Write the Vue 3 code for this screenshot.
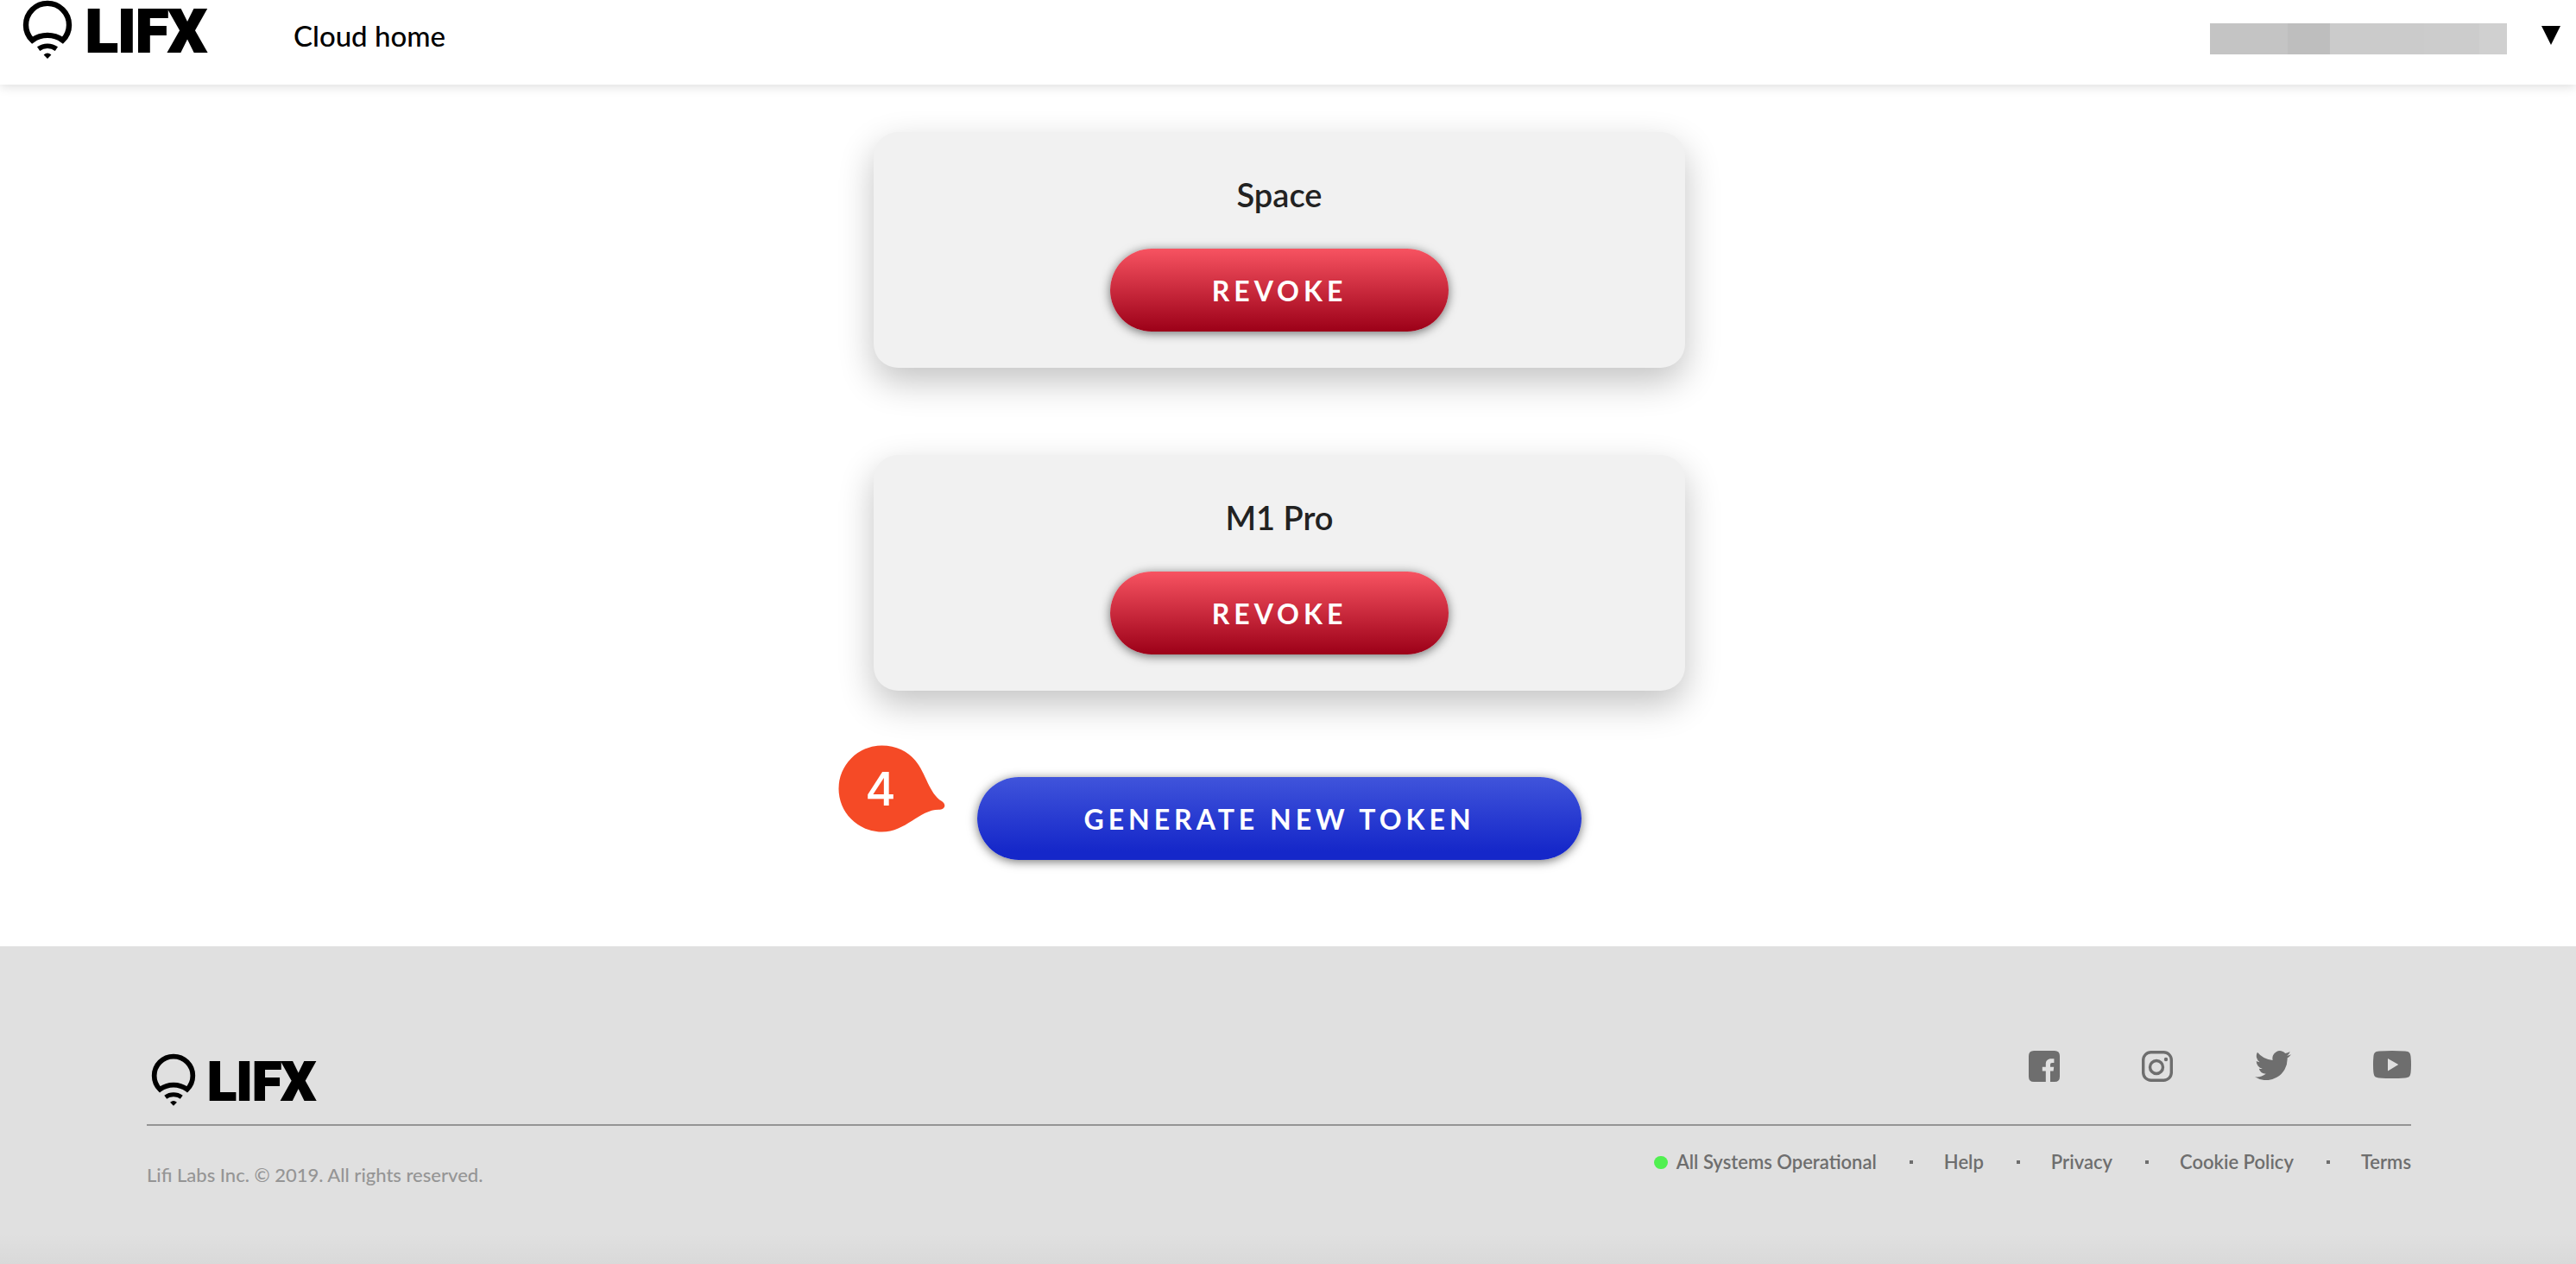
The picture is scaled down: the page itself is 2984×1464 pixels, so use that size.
<script setup>
import { h } from 'vue'

const tokens = ['Space', 'M1 Pro']
const links = ['Help', 'Privacy', 'Cookie Policy', 'Terms']
const nameBlocks = [
  { width: 90, tone: '#c4c4c4' },
  { width: 49, tone: '#bebebe' },
  { width: 109, tone: '#cbcbcb' },
  { width: 64, tone: '#cccccc' },
  { width: 32, tone: '#d0d0d0' }
]

const LifxLogo = () =>
  h('svg', { viewBox: '0 0 224 68', role: 'img', 'aria-label': 'LIFX', overflow: 'visible' }, [
    h('path', {
      d: 'M10.4 46.6 A25 25 0 1 1 45.6 46.6 A30 30 0 0 0 10.4 46.6 Z',
      fill: 'none',
      stroke: 'currentColor',
      'stroke-width': 6.4
    }),
    h('path', {
      d: 'M17.6 56.6 A18 18 0 0 1 38.4 56.6',
      fill: 'none',
      stroke: 'currentColor',
      'stroke-width': 5.6
    }),
    h('path', { d: 'M23.6 63.4 Q28 59.6 32.4 63.4 L28 68 Z', fill: 'currentColor' }),
    h(
      'text',
      {
        x: 72,
        y: 60,
        'font-family': 'Roboto, sans-serif',
        'font-weight': 900,
        'font-size': 69,
        fill: 'currentColor',
        stroke: 'currentColor',
        'stroke-width': 2
      },
      'LIFX'
    )
  ])
</script>

<template>
  <div class="page">
    <header class="topbar">
      <a class="brand" href="#"><LifxLogo class="brand-logo" /></a>
      <nav class="topnav"><a href="#">Cloud home</a></nav>
      <button class="account" type="button" aria-label="Account menu">
        <span class="account-name">
          <span
            v-for="(block, i) in nameBlocks"
            :key="i"
            :style="{ width: block.width + 'px', background: block.tone }"
          ></span>
        </span>
        <svg class="caret" viewBox="0 0 22 22"><path d="M0 0H22L11 22Z" /></svg>
      </button>
    </header>

    <main class="content">
      <section v-for="token in tokens" :key="token" class="card">
        <h2>{{ token }}</h2>
        <button class="pill revoke" type="button">REVOKE</button>
      </section>
      <div class="generate-row">
        <button class="pill generate" type="button">GENERATE NEW TOKEN</button>
        <div class="marker">
          <svg viewBox="0 0 126 104">
            <path
              d="M51.500 1.500C68 1.500 82 8.500 90 18.500C103 34 106 57 121 66C127 70 124 76 118.500 75.700C95 75 80 101.500 51.500 101.500A50 50 0 0 1 51.500 1.500Z"
            />
          </svg>
          <span>4</span>
        </div>
      </div>
    </main>

    <footer class="footer">
      <div class="footer-inner">
        <div class="footer-top">
          <a class="footer-brand" href="#"><LifxLogo class="footer-logo" /></a>
          <div class="social">
            <a href="#" aria-label="Facebook">
              <svg width="36" height="36" viewBox="0 0 36 36">
                <path
                  d="M6 0H30Q36 0 36 6V30Q36 36 30 36H25V23.500H28.600L29.200 18.700H25V16.400C25 14.700 25.700 14 27.200 14H29.400V9.200H26.200C22 9.200 19.800 11.600 19.800 15.300V18.700H15.800V23.500H19.800V36H6Q0 36 0 30V6Q0 0 6 0Z"
                />
              </svg>
            </a>
            <a href="#" aria-label="Instagram">
              <svg width="36" height="36" viewBox="0 0 36 36">
                <rect x="1.700" y="1.700" width="32.600" height="32.600" rx="9" class="line" />
                <circle cx="17" cy="19" r="7.500" class="line" />
                <circle cx="28" cy="10" r="2.200" />
              </svg>
            </a>
            <a href="#" aria-label="Twitter">
              <svg width="42" height="34" viewBox="0 2.200 24 19.400">
                <path
                  d="M24 4.600a10 10 0 0 1-2.800.8 5 5 0 0 0 2.100-2.700 10 10 0 0 1-3.100 1.200 4.900 4.900 0 0 0-8.400 4.500A14 14 0 0 1 1.700 3.200a4.900 4.900 0 0 0 1.500 6.500 5 5 0 0 1-2.200-.6v.1a4.900 4.900 0 0 0 4 4.800 5 5 0 0 1-2.300.1 4.900 4.900 0 0 0 4.600 3.400A10 10 0 0 1 0 19.500 14 14 0 0 0 21.500 7.100 10 10 0 0 0 24 4.600z"
                />
              </svg>
            </a>
            <a href="#" aria-label="YouTube">
              <svg width="44" height="32" viewBox="0 0 44 32">
                <path
                  fill-rule="evenodd"
                  d="M7 .6Q22-.6 37 .6C42 1 43 2.500 43.600 7Q44.400 16 43.600 25C43 29.500 42 31 37 31.400Q22 32.600 7 31.400C2 31 1 29.500.4 25Q-.4 16 .4 7C1 2.500 2 1 7 .6ZM17 9V23.400L29.300 16Z"
                />
              </svg>
            </a>
          </div>
        </div>
        <div class="footer-bottom">
          <p>Lifi Labs Inc. © 2019. All rights reserved.</p>
          <ul class="links">
            <li class="status"><a href="#">All Systems Operational</a></li>
            <li v-for="link in links" :key="link"><a href="#">{{ link }}</a></li>
          </ul>
        </div>
      </div>
    </footer>
  </div>
</template>

<style>
body {
  margin: 0;
  background: #fff;
}
</style>

<style scoped>
.page {
  display: flex;
  flex-direction: column;
  min-height: 100vh;
  font-family: Lato, 'Open Sans', sans-serif;
  color: #222;
}
a {
  color: inherit;
  text-decoration: none;
}
svg {
  display: block;
  fill: currentColor;
}
button {
  border: 0;
  font-family: inherit;
  cursor: pointer;
}
.topbar {
  display: flex;
  align-items: flex-start;
  height: 98px;
  padding: 0 18px 0 27px;
  box-sizing: border-box;
  color: #000;
  box-shadow: 0 2px 12px rgba(0, 0, 0, 0.14);
}
.brand-logo {
  width: 224px;
  height: 68px;
}
.topnav {
  margin-left: 89px;
  padding-top: 21px;
  font-size: 33px;
  line-height: 40px;
  font-weight: 500;
}
.account {
  display: flex;
  align-items: center;
  gap: 40px;
  margin-left: auto;
  padding: 27px 0 0;
  background: none;
  color: #000;
}
.account-name {
  display: flex;
  height: 36px;
}
.caret {
  width: 22px;
  height: 22px;
  margin-bottom: 8px;
}
.content {
  display: flex;
  flex-direction: column;
  align-items: center;
  gap: 101px;
  padding: 55px 20px 100px 0;
}
.card {
  display: flex;
  flex-direction: column;
  align-items: center;
  width: 940px;
  max-width: 100%;
  padding: 48px 0 42px;
  box-sizing: border-box;
  border-radius: 28px;
  background: #f1f1f1;
  box-shadow: 0 16px 40px rgba(0, 0, 0, 0.24);
}
.card h2 {
  margin: 0 0 39px;
  font-size: 38px;
  line-height: 48px;
  font-weight: 600;
}
.pill {
  height: 96px;
  border-radius: 48px;
  color: #fff;
  font-size: 32px;
  font-weight: 700;
  letter-spacing: 5px;
  box-shadow: 0 2px 12px rgba(0, 0, 0, 0.55);
}
.revoke {
  width: 392px;
  background: linear-gradient(#f75361, #9c0018);
}
.generate {
  width: 700px;
  background: linear-gradient(#4054db, #1527c9 90%);
}
.generate-row {
  position: relative;
  margin-top: -1px;
}
.marker {
  position: absolute;
  left: -162px;
  top: -38px;
  width: 126px;
  height: 104px;
  color: #f54a26;
}
.marker span {
  position: absolute;
  left: 0;
  top: 0;
  width: 100px;
  color: #fff;
  font: 500 54px/104px Inter, sans-serif;
  text-align: center;
}
.footer {
  flex: 1;
  padding: 121px 191px 80px 170px;
  background: linear-gradient(transparent calc(100% - 36px), rgba(0, 0, 0, 0.03)) #e0e0e0;
  color: #6e6e6e;
  font-size: 22px;
  line-height: 28px;
}
.footer-top {
  display: flex;
  justify-content: space-between;
  align-items: flex-start;
  height: 85px;
  border-bottom: 2px solid #959595;
}
.footer-brand {
  margin: 3px 0 0 6px;
  color: #000;
}
.footer-logo {
  width: 200px;
  height: 61px;
}
.social {
  display: flex;
  gap: 95px;
}
.line {
  fill: none;
  stroke: currentColor;
  stroke-width: 3.4px;
}
.footer-bottom {
  display: flex;
  justify-content: space-between;
  align-items: flex-start;
}
.footer-bottom p {
  margin: 43px 0 0;
  color: #959595;
  font-weight: 500;
}
.links {
  display: flex;
  margin: 28px 0 0;
  padding: 0;
  list-style: none;
  font-weight: 600;
}
.links li {
  display: flex;
  align-items: center;
}
.links li + li::before {
  content: '';
  width: 4px;
  height: 4px;
  margin: 0 36px 0 38px;
  background: currentColor;
}
.status a::before {
  content: '';
  display: inline-block;
  width: 16px;
  height: 15px;
  margin-right: 10px;
  border-radius: 8px;
  background: #50f050;
}
</style>
